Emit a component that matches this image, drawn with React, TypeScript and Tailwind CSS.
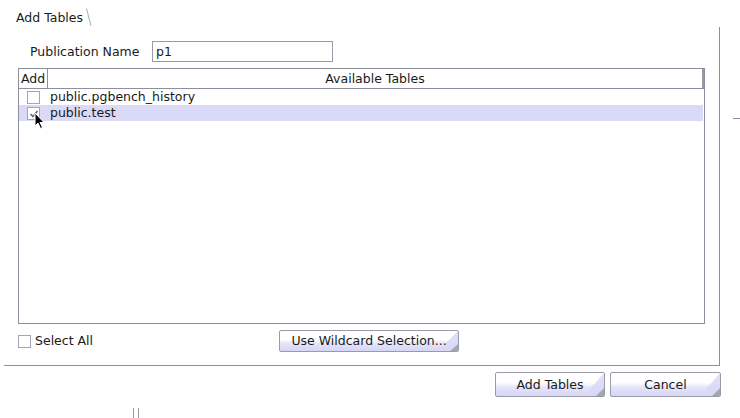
import React from "react";

const font = { fontFamily: '"DejaVu Sans", Verdana, sans-serif' };

function Checkbox({ checked = false }: { checked?: boolean }) {
  return (
    <div className="w-[13px] h-[13px] border border-[#a4a4b4] bg-white relative shrink-0">
      {checked && (
        <svg className="absolute left-[1px] top-[1px]" width="10" height="10" viewBox="0 0 10 10">
          <path d="M1.5 5 L4 7.5 L8.5 2" stroke="#6a6a78" strokeWidth="1.6" fill="none" />
        </svg>
      )}
    </div>
  );
}

function Btn({ label, w }: { label: string; w: string }) {
  return (
    <div
      className={`${w} h-full relative rounded-[2px] border border-[#9a9aaa] flex items-center justify-center text-[12.5px] text-[#1a1a1a] overflow-hidden bg-[linear-gradient(to_bottom,#ffffff_0%,#ffffff_42%,#e4e4fa_62%,#d6d6f6_100%)]`}
    >
      <svg className="absolute right-0 top-0" width="24" height="24" viewBox="0 0 24 24" preserveAspectRatio="none" style={{ height: "100%" }}>
        <polygon points="24,0 24,24 4,24" fill="#d8d8f6" opacity="0.85" />
        <polygon points="24,16 24,24 16,24" fill="#a6a6ae" />
      </svg>
      <span className="relative pt-[1px]">{label}</span>
    </div>
  );
}

export default function App() {
  return (
    <div className="w-[740px] h-[418px] bg-white relative overflow-hidden text-[#1a1a1a]" style={font}>
      {/* tab header */}
      <div className="h-[27px] flex items-start">
        <div className="ml-[16px] mt-[10px] text-[12.5px] leading-[16px]">Add Tables</div>
        <svg className="ml-[3px] mt-[8px]" width="6" height="19" viewBox="0 0 6 19">
          <path d="M0.5 0.5 L5 18" stroke="#a8a8b4" strokeWidth="1" fill="none" />
        </svg>
      </div>

      {/* panel */}
      <div className="ml-[4px] w-[716px] h-[339px] border-r border-b border-[#8e8e9c] flex flex-col pt-[14px]">
        <div className="h-[21px] ml-[26px] flex items-center text-[12.5px]">
          <div className="w-[122px] pt-[1px]">Publication Name</div>
          <div className="w-[181px] h-[21px] border border-[#9a9aa8] flex items-center pl-[3px] pt-[1px]">p1</div>
        </div>

        <div className="mt-[6px] ml-[14px] w-[687px] h-[256px] border border-[#8e8e9c] flex flex-col text-[12.5px]">
          <div className="h-[20px] flex border-b border-[#8e8e9c]">
            <div className="w-[29px] border-r border-[#8e8e9c] pl-[2px] leading-[20px]">Add</div>
            <div className="flex-1 text-center leading-[20px] border-r-2 border-[#9a9aa6]">Available Tables</div>
          </div>
          <div className="h-[16px] flex items-center mr-[1px]">
            <div className="w-[30px] flex pl-[8px]">
              <Checkbox />
            </div>
            <div className="pl-[1px]">public.pgbench_history</div>
          </div>
          <div className="h-[16px] flex items-center bg-[#dadaf8] mr-[1px] relative">
            <div className="w-[30px] flex pl-[8px]">
              <Checkbox checked />
            </div>
            <div className="pl-[1px]">public.test</div>
            <svg className="absolute left-[15px] top-[7px]" width="12" height="18" viewBox="0 0 12 18">
              <path d="M1 1 L1 14 L4 11 L6.5 16.5 L8.5 15.5 L6 10.5 L10 10.5 Z" fill="#000" stroke="#fff" strokeWidth="1" />
            </svg>
          </div>
        </div>

        <div className="mt-[6px] h-[22px] flex items-center text-[12.5px]">
          <div className="ml-[14px] flex items-center">
            <Checkbox />
            <span className="ml-[4px]">Select All</span>
          </div>
          <div className="ml-[186px] h-[22px] w-[180px]">
            <Btn label="Use Wildcard Selection..." w="w-[180px]" />
          </div>
        </div>
      </div>

      {/* buttons */}
      <div className="mt-[6px] h-[25px] flex justify-end w-[721px] gap-[5px]">
        <Btn label="Add Tables" w="w-[110px]" />
        <Btn label="Cancel" w="w-[111px]" />
      </div>

      {/* decorations */}
      <div className="absolute left-[733px] top-[118px] w-[7px] h-px bg-[#8e8e9c]" />
      <div className="absolute left-[133px] top-[408px] w-px h-[10px] bg-[#9a9aa8]" />
      <div className="absolute left-[138px] top-[408px] w-px h-[10px] bg-[#9a9aa8]" />
    </div>
  );
}
